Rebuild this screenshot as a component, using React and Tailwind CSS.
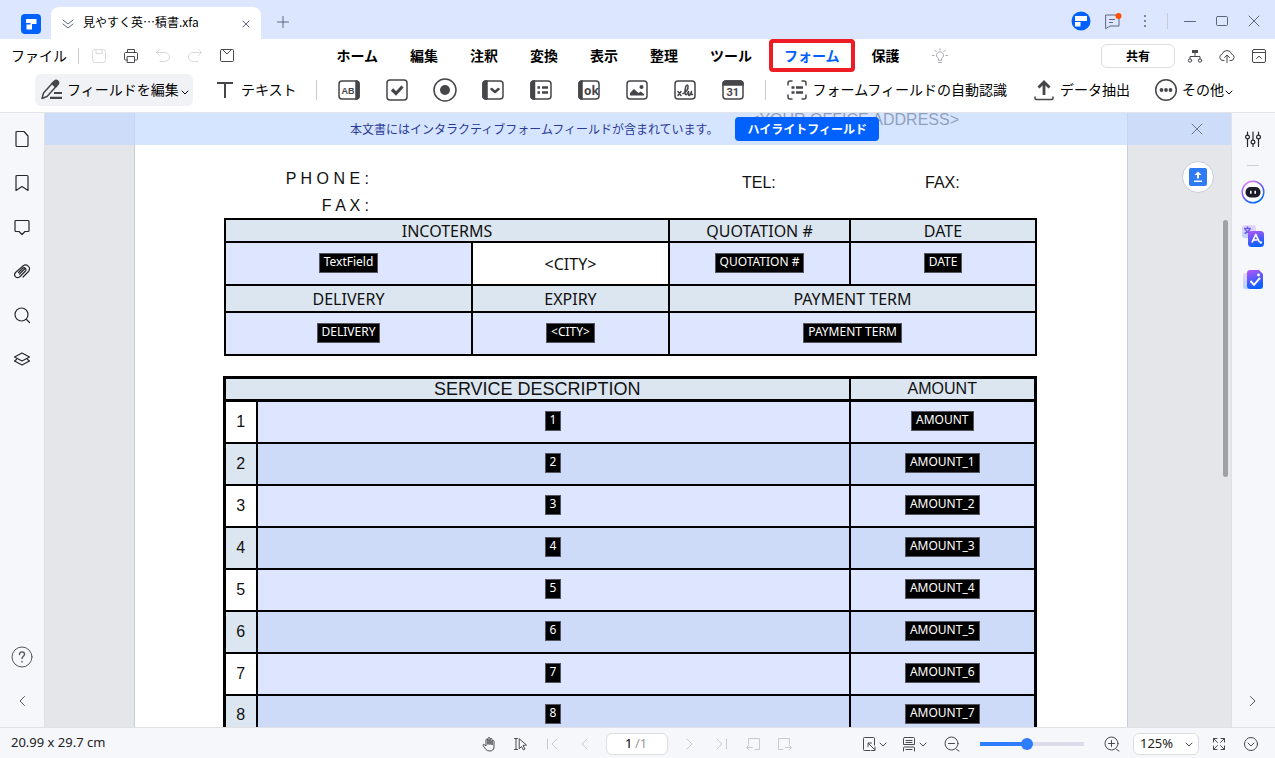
import { useState } from 'react'

const Icon = ({ size = 16, stroke = 1, className = '', children }) => (
  <svg
    width={size}
    height={size}
    viewBox={`0 0 ${size} ${size}`}
    fill="none"
    stroke="currentColor"
    strokeWidth={stroke}
    strokeLinecap="round"
    strokeLinejoin="round"
    className={`shrink-0 ${className}`}
    aria-hidden="true"
  >
    {children}
  </svg>
)

const IconButton = ({ label, className = 'w-8 h-8', children }) => (
  <button type="button" aria-label={label} className={`flex items-center justify-center shrink-0 ${className}`}>
    {children}
  </button>
)

const Chevron = ({ className = '' }) => (
  <Icon size={8} className={className}>
    <path d="M1 3l3 3 3-3" />
  </Icon>
)

const menus = ['ホーム', '編集', '注釈', '変換', '表示', '整理', 'ツール', 'フォーム', '保護']

const formTools = [
  {
    label: 'テキストフィールド',
    art: (
      <>
        <rect x="2" y="3" width="20" height="18" rx="3" />
        <path d="M19 3a3 3 0 0 1 3 3v12a3 3 0 0 1-3 3z" fill="currentColor" />
        <text x="4.5" y="15.5" fontSize="9" fontWeight="700" fontFamily="Liberation Sans, sans-serif" fill="currentColor" stroke="none">AB</text>
      </>
    ),
  },
  {
    label: 'チェックボックス',
    art: (
      <>
        <rect x="2" y="2" width="20" height="20" rx="3" />
        <path d="M7 11.5l4 4 6.5-7" strokeWidth="3.2" strokeLinecap="butt" strokeLinejoin="miter" />
      </>
    ),
  },
  {
    label: 'ラジオボタン',
    art: (
      <>
        <circle cx="12" cy="12" r="11" />
        <circle cx="12" cy="12" r="5" fill="currentColor" stroke="none" />
      </>
    ),
  },
  {
    label: 'コンボボックス',
    art: (
      <>
        <rect x="2" y="3" width="20" height="18" rx="3" />
        <path d="M6 3H5a3 3 0 0 0-3 3v12a3 3 0 0 0 3 3h1z" fill="currentColor" />
        <path d="M10.5 11l3.5 3 3.5-3" strokeWidth="2.5" />
      </>
    ),
  },
  {
    label: 'リストボックス',
    art: (
      <>
        <rect x="2" y="3" width="20" height="18" rx="3" />
        <path d="M5.5 3H5a3 3 0 0 0-3 3v12a3 3 0 0 0 3 3h.5z" fill="currentColor" />
        <path d="M8.5 9.5H11M8.5 14.5H11M13 9.5h6M13 14.5h6" strokeWidth="2.4" strokeLinecap="butt" />
      </>
    ),
  },
  {
    label: 'ボタン',
    art: (
      <>
        <rect x="2" y="3" width="20" height="18" rx="3" />
        <path d="M5 3a3 3 0 0 0-3 3v12a3 3 0 0 0 3 3z" fill="currentColor" />
        <text x="7" y="16.5" fontSize="12" fontWeight="700" fontFamily="Open Sans, sans-serif" fill="currentColor" stroke="none">ok</text>
      </>
    ),
  },
  {
    label: '画像フィールド',
    art: (
      <>
        <rect x="2" y="3" width="20" height="18" rx="3" />
        <path d="M5 17.5V15l4-4 4.500 4 2-1.500 3.500 2.500v1.500z" fill="currentColor" stroke="none" />
        <circle cx="16.5" cy="9" r="2" fill="currentColor" stroke="none" />
      </>
    ),
  },
  {
    label: 'デジタル署名',
    art: (
      <>
        <rect x="2" y="3" width="20" height="18" rx="3" />
        <path d="M5 13.5l3 4M8 13.5l-3 4" />
        <path d="M10 15.5c3-1 5.5-4.5 5-7.500-.3-1.500-1.800-1-2.200.5-.8 3-1.300 6.500-.3 8 1 1 2-1 3-3 .5 2-.5 4 .7 4 .8 0 1.800-2.500 2.300-4-.3 2-.5 3.500 1 3" />
      </>
    ),
  },
  {
    label: '日付フィールド',
    art: (
      <>
        <rect x="2" y="3" width="20" height="18" rx="3" />
        <path d="M2 7V6a3 3 0 0 1 3-3h14a3 3 0 0 1 3 3v1z" fill="currentColor" />
        <text x="5.5" y="18" fontSize="11" fontWeight="700" fontFamily="Roboto, sans-serif" fill="currentColor" stroke="none">31</text>
      </>
    ),
  },
]

const sideTools = [
  { label: 'サムネイル', path: 'M4 1.5h7L15 6v9.500a1 1 0 0 1-1 1H4a1 1 0 0 1-1-1v-13a1 1 0 0 1 1-1z' },
  { label: 'ブックマーク', path: 'M3 16.5v-14a1 1 0 0 1 1-1h10a1 1 0 0 1 1 1v14l-6-4z' },
  { label: '注釈', path: 'M3 2.5h12a1 1 0 0 1 1 1v9a1 1 0 0 1-1 1h-3L9 16.500 6 13.500H3a1 1 0 0 1-1-1v-9a1 1 0 0 1 1-1z' },
  { label: '添付ファイル', path: 'M10 15l5.500-5.500c3-4-2-8.500-5.500-5.500L2.500 10.500c-2.500 3 1 6.500 4 4.500l6-6c1.500-2-1-4.500-3-2.500L5.500 10.500M6.500 12l5-5' },
  { label: '検索', path: 'M15 8.500a6.500 6.500 0 1 1-13 0 6.500 6.500 0 0 1 13 0zM13.500 13.500l3 3' },
  { label: 'レイヤー', path: 'M9 3l7.500 4L9 11 1.500 7zM3.500 9.500l-2 1.500L9 15l7.500-4-2-1.500' },
]

const services = ['AMOUNT', 'AMOUNT_1', 'AMOUNT_2', 'AMOUNT_3', 'AMOUNT_4', 'AMOUNT_5', 'AMOUNT_6', 'AMOUNT_7']

const FieldTag = ({ children }) => (
  <span className="block w-fit h-5 mx-auto px-1 bg-black border border-[#55555f] font-['Noto_Sans'] text-xs leading-[16px] text-white whitespace-nowrap">
    {children}
  </span>
)

const TitleBar = () => (
  <header className="flex h-[39px] bg-[#dde6ff] text-[#5f6580]">
    <div className="flex items-center pl-[21px] pr-[10px] pt-[9px]">
      <svg width="20" height="20" viewBox="0 0 20 20" aria-hidden="true">
        <rect width="20" height="20" rx="4" fill="#0061ff" />
        <path d="M5 5h10.500v5H11v5.500H5.500v-5h4V9H5z" fill="#fff" />
      </svg>
    </div>
    <div className="flex items-center w-[210px] mt-[7px] pl-[10px] pr-[7px] pb-[2px] bg-white rounded-t-lg">
      <Icon size={14} className="mt-1">
        <path d="M2 3l5 4 5-4M2 7l5 4 5-4" />
      </Icon>
      <span className="flex-1 ml-2 text-xs text-black whitespace-nowrap">見やすく英…積書.xfa</span>
      <IconButton label="タブを閉じる" className="w-4 h-4 mt-1">
        <Icon size={8}><path d="M1 1l6 6M7 1L1 7" /></Icon>
      </IconButton>
    </div>
    <IconButton label="新しいタブ" className="w-6 h-6 ml-[10px] mt-[10px]">
      <Icon size={12}><path d="M6 .5v11M.5 6h11" /></Icon>
    </IconButton>
    <div className="flex items-center ml-auto mr-[5px] mt-[2px]">
      <IconButton label="アカウント">
        <svg width="20" height="20" viewBox="0 0 20 20" aria-hidden="true">
          <circle cx="10" cy="10" r="9.5" fill="#0061ff" />
          <path d="M4 5h12v5H4zM4 11h5.500v4.500H4z" fill="#fff" />
        </svg>
      </IconButton>
      <IconButton label="メッセージ">
        <Icon size={18}>
          <path d="M2 3h13v11H6l-4 2.500zM5.500 7.500h5M5.500 10.500h3" />
          <circle cx="14.5" cy="4" r="3" fill="#ff5000" stroke="none" />
        </Icon>
      </IconButton>
      <IconButton label="メニュー">
        <Icon size={16}>
          <g fill="currentColor" stroke="none">
            <circle cx="8" cy="3" r="1" />
            <circle cx="8" cy="8" r="1" />
            <circle cx="8" cy="13" r="1" />
          </g>
        </Icon>
      </IconButton>
      <span className="w-px h-4 mx-[6px] bg-[#c8cad4]" />
      <IconButton label="最小化"><Icon size={12}><path d="M.5 6.500h11" /></Icon></IconButton>
      <IconButton label="最大化"><Icon size={12}><rect x=".5" y="1.5" width="11" height="9" rx="1" /></Icon></IconButton>
      <IconButton label="閉じる"><Icon size={12}><path d="M1 1l10 10M11 1L1 11" /></Icon></IconButton>
    </div>
  </header>
)

const MenuBar = ({ active, setActive }) => (
  <nav className="grid grid-cols-[1fr_auto_1fr] items-center h-[34px] text-sm">
    <div className="flex items-center pl-[11px]">
      <button type="button" className="pb-[2px]">ファイル</button>
      <span className="w-px h-4 ml-[11px] mr-1 bg-[#cccdd4]" />
      <IconButton label="保存">
        <Icon className="text-[#d9dade]"><rect x="1.5" y="1.5" width="13" height="13" rx="2" /><path d="M5 1.500v4h6v-4" /></Icon>
      </IconButton>
      <IconButton label="印刷">
        <Icon className="text-[#4a4a4e]">
          <path d="M4.500 4.500v-3h7v3M4.500 12h-2a1 1 0 0 1-1-1V5.500a1 1 0 0 1 1-1h11a1 1 0 0 1 1 1V11a1 1 0 0 1-1 1h-2" />
          <rect x="4.5" y="8.5" width="7" height="6" />
        </Icon>
      </IconButton>
      <IconButton label="元に戻す">
        <Icon className="text-[#d9dade]"><path d="M4.500 1.500l-3 3 3 3M1.500 4.500H10a4.500 4.500 0 0 1 0 9H5" /></Icon>
      </IconButton>
      <IconButton label="やり直し">
        <Icon className="text-[#d9dade]"><path d="M11.500 1.500l3 3-3 3M14.500 4.500H6a4.500 4.500 0 0 0 0 9h5" /></Icon>
      </IconButton>
      <IconButton label="メール">
        <Icon className="text-[#4a4a4e]"><rect x="1.5" y="1.5" width="13" height="12" rx="1" /><path d="M4 2l4 4 4-4" /></Icon>
      </IconButton>
    </div>
    <div className="flex items-center gap-8 ml-[9px] pb-px font-bold">
      {menus.map((name) =>
        name === active ? (
          <button key={name} type="button" className="h-[33px] -mx-[15px] px-[11px] pb-[2px] border-4 border-[#ee1c24] rounded-sm text-[#0061ff] whitespace-nowrap">
            {name}
          </button>
        ) : (
          <button key={name} type="button" onClick={() => setActive(name)} className="pb-[2px] whitespace-nowrap">
            {name}
          </button>
        ),
      )}
      <IconButton label="ヒント" className="w-4 h-4">
        <Icon className="text-[#a4a6b8]">
          <path d="M6.500 12v-1.500a3.500 3.500 0 1 1 3 0V12zM6.500 14.500h3M8 .5v1.500M2.500 2l1.500 1.500M13.500 2L12 3.500M.5 7.500H2M14 7.500h1.500" />
        </Icon>
      </IconButton>
    </div>
    <div className="flex items-center justify-end">
      <button type="button" className="w-[74px] h-6 mr-1 border border-[#dcdde2] rounded-md text-xs font-bold">共有</button>
      <IconButton label="組織">
        <Icon className="text-[#4a4a4e]">
          <rect x="5" y="2" width="6" height="3" fill="currentColor" stroke="none" />
          <path d="M8 5v3M3 11V8.500h10V11" />
          <circle cx="3" cy="12.5" r="1.7" /><circle cx="13" cy="12.5" r="1.7" />
        </Icon>
      </IconButton>
      <IconButton label="クラウドへ保存">
        <Icon className="text-[#4a4a4e]">
          <path d="M5 12.500H4a3.200 3.200 0 0 1-.8-6.300 4.900 4.900 0 0 1 9.500 0A3.200 3.200 0 0 1 12 12.500h-1M8 14.500v-7M5.500 9.500L8 7l2.500 2.500" />
        </Icon>
      </IconButton>
      <IconButton label="リボンを折りたたむ">
        <Icon className="text-[#4a4a4e]"><rect x="1.5" y="1.5" width="13" height="13" rx="1.5" /><path d="M1.500 4.500h13M5.500 10.500L8 8l2.500 2.500" /></Icon>
      </IconButton>
    </div>
  </nav>
)

const Toolbar = () => (
  <div className="flex items-center h-10 pl-[35px] pb-[6px] border-b border-[#e4e5e8] text-sm whitespace-nowrap">
    <button type="button" className="flex items-center h-8 w-[158px] pl-[5px] bg-[#f1f2f6] rounded-md">
      <Icon size={24} stroke={1.5} className="mr-[3px] text-[#45454a]">
        <path d="M2 20.500l1.500-5.500L13 4.500l3.500 3.500L7 18.500z" />
        <path d="M12 5.500l2.500-2.500c2-2 5.500 1 3.500 3.500L15.500 9z" fill="currentColor" />
        <path d="M14 15h8M10 19.800h12" strokeWidth="2.2" strokeLinecap="butt" />
      </Icon>
      <span className="pb-[2px]">フィールドを編集</span>
      <Chevron className="ml-[2px] mt-1" />
    </button>
    <button type="button" className="flex items-center ml-6">
      <Icon size={16} stroke={2} className="mr-2 text-[#45454a]"><path d="M0 1h16M8 1v15" strokeLinecap="butt" /></Icon>
      <span className="pb-[2px]">テキスト</span>
    </button>
    <span className="w-px h-5 ml-[19px] mr-2 bg-[#c8cad4]" />
    {formTools.map((tool) => (
      <IconButton key={tool.label} label={tool.label} className="w-12 h-8">
        <Icon size={24} stroke={1.5} className="text-[#45454a]">{tool.art}</Icon>
      </IconButton>
    ))}
    <span className="w-px h-5 ml-[8px] mr-[20px] bg-[#c8cad4]" />
    <button type="button" className="flex items-center">
      <Icon size={22} stroke={1.5} className="mr-[5px] text-[#45454a]">
        <path d="M6 2H4a2 2 0 0 0-2 2v2M16 2h2a2 2 0 0 1 2 2v2M2 16v2a2 2 0 0 0 2 2h2M20 16v2a2 2 0 0 1-2 2h-2" />
        <path d="M5.500 8.500h3M5.500 13.500h3M10 8.500h7M10 13.500h7" strokeWidth="2.6" strokeLinecap="butt" />
      </Icon>
      <span className="pb-[2px]">フォームフィールドの自動認識</span>
    </button>
    <button type="button" className="flex items-center ml-[26px]">
      <Icon size={22} className="mr-[5px] text-[#45454a]" stroke={1.5}>
        <path d="M2 18v1.500a1 1 0 0 0 1 1h16a1 1 0 0 0 1-1V18" />
        <path d="M11 16V4M5.500 8.500L11 3l5.500 5.500" strokeWidth="2.8" strokeLinecap="butt" strokeLinejoin="miter" />
      </Icon>
      <span className="pb-[2px]">データ抽出</span>
    </button>
    <button type="button" className="flex items-center ml-6">
      <Icon size={24} className="mr-1 text-[#45454a]" stroke={1.5}>
        <circle cx="12" cy="12" r="10.3" />
        <g fill="currentColor" stroke="none"><circle cx="7.5" cy="12" r="1.9" /><circle cx="12" cy="12" r="1.9" /><circle cx="16.5" cy="12" r="1.9" /></g>
      </Icon>
      <span className="pb-[2px]">その他</span>
      <Chevron className="ml-px mt-1" />
    </button>
  </div>
)

const LeftRail = () => (
  <aside className="flex flex-col items-center w-[45px] py-1 bg-[#f6f7fb] border-r border-[#e0e1e5] text-[#26262b]">
    {sideTools.map((tool) => (
      <IconButton key={tool.label} label={tool.label} className="w-11 h-11">
        <Icon size={18} stroke={1.2}><path d={tool.path} /></Icon>
      </IconButton>
    ))}
    <IconButton label="ヘルプ" className="w-11 h-11 mt-auto">
      <Icon size={22} className="text-[#55555c]">
        <circle cx="11" cy="11" r="10" />
        <path d="M8.500 8.500c0-3.500 5-3.500 5-.3 0 2-2.500 2-2.500 4.300M11 15.500v.5" strokeWidth="1.4" />
      </Icon>
    </IconButton>
    <IconButton label="折りたたむ" className="w-11 h-11">
      <Icon size={12} className="text-[#55555c]"><path d="M8.500 1.500L4 6l4.500 4.500" /></Icon>
    </IconButton>
  </aside>
)

const RightRail = () => (
  <aside className="flex flex-col items-center w-11 py-1 pr-[2px] bg-[#f6f7fb] border-l border-[#e0e1e5] text-[#26262b]">
    <IconButton label="プロパティ" className="w-10 h-11">
      <Icon size={18} stroke={1.2}>
        <path d="M3.500 2v3M3.500 9v7.500M9 2v8M9 14v2.500M14.500 2v3M14.500 9v7.500" />
        <circle cx="3.5" cy="7" r="1.9" /><circle cx="9" cy="12" r="1.9" /><circle cx="14.5" cy="7" r="1.9" />
      </Icon>
    </IconButton>
    <span className="w-3 h-px my-1 bg-[#cfd0d6]" />
    <IconButton label="AIアシスタント" className="w-10 h-11">
      <svg width="24" height="24" viewBox="0 0 24 24" aria-hidden="true">
        <defs>
          <linearGradient id="ring" x1="0" y1="0" x2=".6" y2="1"><stop stopColor="#ff8af0" /><stop offset=".5" stopColor="#7d5cf5" /><stop offset="1" stopColor="#0a6cff" /></linearGradient>
        </defs>
        <circle cx="12" cy="12" r="10.8" fill="#fff" stroke="url(#ring)" strokeWidth="1.5" />
        <rect x="4.5" y="7" width="15" height="10.5" rx="5" fill="#1c1c28" />
        <path d="M9.800 10.800v3M14.200 10.800v3" stroke="#fff" strokeWidth="1.6" />
      </svg>
    </IconButton>
    <IconButton label="翻訳" className="w-10 h-11">
      <svg width="24" height="24" viewBox="0 0 24 24" aria-hidden="true">
        <defs>
          <linearGradient id="violet" x1="0" y1="0" x2=".3" y2="1"><stop stopColor="#b755f5" /><stop offset="1" stopColor="#0a60ff" /></linearGradient>
          <linearGradient id="pale" x1="0" y1="0" x2="0" y2="1"><stop stopColor="#e6d4fb" /><stop offset="1" stopColor="#b9d2ff" /></linearGradient>
        </defs>
        <rect x="1" y="1" width="14" height="13" rx="3" fill="url(#pale)" />
        <path d="M3 4.500h7M6.500 2.500v2M3.500 9.500c3-1 5-2.500 5.500-5M4 5c1 2 3 3.500 4 4" stroke="#6b5cf0" strokeWidth="1.5" fill="none" />
        <rect x="7" y="7" width="16" height="16" rx="3.5" fill="url(#violet)" />
        <path d="M11 18.500l3.800-8 3.500 7.500M12.300 16h4" stroke="#fff" strokeWidth="1.7" fill="none" strokeLinejoin="round" />
        <circle cx="19.8" cy="18.5" r="1.3" fill="#fff" />
      </svg>
    </IconButton>
    <IconButton label="校正" className="w-10 h-11">
      <svg width="24" height="24" viewBox="0 0 24 24" aria-hidden="true">
        <rect x="2" y="5" width="10" height="16" rx="2.5" fill="url(#pale)" />
        <path d="M9 2h9l4 4v12a3 3 0 0 1-3 3H9a3 3 0 0 1-3-3V5a3 3 0 0 1 3-3z" fill="url(#violet)" />
        <path d="M9.500 13l3.500 3.800 6-7" stroke="#fff" strokeWidth="1.9" fill="none" />
        <circle cx="17.5" cy="7" r="1.4" fill="#fff" />
      </svg>
    </IconButton>
    <IconButton label="展開" className="w-10 h-11 mt-auto">
      <Icon size={12} className="text-[#55555c]"><path d="M3.500 1.500L8 6l-4.500 4.500" /></Icon>
    </IconButton>
  </aside>
)

const headCell = 'p-0 border-2 border-black bg-[#dce6f0] font-normal leading-5'
const fieldCell = 'p-0 pb-[2px] border-2 border-black bg-[#dde5ff]'
const altFieldCell = 'p-0 pb-[2px] border-2 border-black bg-[#cddaf8]'

const Sheet = () => (
  <article className="flex-1 min-w-0 pl-[89px] pr-[90px] bg-white border-x border-[#c9cddb] font-['Liberation_Sans'] text-base text-[#111]">
    <p className="pr-[78px] leading-[14px] text-right whitespace-nowrap">&lt;YOUR OFFICE ADDRESS&gt;</p>
    <div className="grid grid-cols-[145fr_373fr_183fr_112fr] h-[53px] mt-[38px] leading-[27px] whitespace-nowrap">
      <div className="text-right">
        <p>P H O N E :</p>
        <p>F A X :</p>
      </div>
      <span />
      <p className="pt-1">TEL:</p>
      <p className="pt-1">FAX:</p>
    </div>

    <table className="w-full table-fixed border-collapse font-['Noto_Sans'] text-center">
      <colgroup>
        <col className="w-[247px]" />
        <col className="w-[197px]" />
        <col className="w-[181px]" />
        <col className="w-[186px]" />
      </colgroup>
      <tbody>
        <tr className="h-[23px]">
          <th colSpan={2} className={headCell}>INCOTERMS</th>
          <th className={headCell}>QUOTATION #</th>
          <th className={headCell}>DATE</th>
        </tr>
        <tr className="h-[43px]">
          <td className={fieldCell}><FieldTag>TextField</FieldTag></td>
          <td className="p-0 border-2 border-black">&lt;CITY&gt;</td>
          <td className={fieldCell}><FieldTag>QUOTATION #</FieldTag></td>
          <td className={fieldCell}><FieldTag>DATE</FieldTag></td>
        </tr>
        <tr className="h-[27px]">
          <th className={headCell}>DELIVERY</th>
          <th className={headCell}>EXPIRY</th>
          <th colSpan={2} className={headCell}>PAYMENT TERM</th>
        </tr>
        <tr className="h-[43px]">
          <td className={fieldCell}><FieldTag>DELIVERY</FieldTag></td>
          <td className={fieldCell}><FieldTag>&lt;CITY&gt;</FieldTag></td>
          <td colSpan={2} className={fieldCell}><FieldTag>PAYMENT TERM</FieldTag></td>
        </tr>
      </tbody>
    </table>

    <div className="mt-5 -ml-px">
      <table className="w-full table-fixed border-collapse border-[3px] border-black text-center">
        <colgroup>
          <col className="w-8" />
          <col className="w-[593px]" />
          <col className="w-[186px]" />
        </colgroup>
        <thead>
          <tr className="h-[23px]">
            <th colSpan={2} className="p-0 border-2 border-b-[3px] border-black bg-[#dce6f0] text-lg leading-5 font-normal">SERVICE DESCRIPTION</th>
            <th className="p-0 border-2 border-b-[3px] border-black bg-[#dce6f0] leading-5 font-normal">AMOUNT</th>
          </tr>
        </thead>
        <tbody>
          {services.map((name, i) => {
            const even = i % 2 === 1
            return (
              <tr key={name} className="h-[42px]">
                <td className={even ? 'p-0 border-2 border-black bg-[#dce6f0]' : 'p-0 border-2 border-black'}>{i + 1}</td>
                <td className={even ? altFieldCell : fieldCell}><FieldTag>{i + 1}</FieldTag></td>
                <td className={even ? altFieldCell : fieldCell}><FieldTag>{name}</FieldTag></td>
              </tr>
            )
          })}
        </tbody>
      </table>
    </div>
  </article>
)

const Viewer = () => {
  const [notice, setNotice] = useState(true)

  return (
    <main className="relative flex flex-1 min-w-0 pl-[89px] pr-[103px] bg-[#e5e6ea] overflow-hidden">
      <Sheet />
      {/* Notice strip floats over the page */}
      {notice && (
        <div className="absolute inset-x-0 top-0 flex items-center h-8 bg-[#c3d8ff]/70 text-xs text-[#2b3a94]">
          <p className="ml-[305px] whitespace-nowrap">本文書にはインタラクティブフォームフィールドが含まれています。</p>
          <button type="button" className="h-6 ml-[17px] px-3 bg-[#0061ff] rounded-sm font-bold text-white whitespace-nowrap">ハイライトフィールド</button>
          <button type="button" aria-label="通知を閉じる" onClick={() => setNotice(false)} className="flex items-center justify-center w-8 h-8 ml-auto mr-[18px] text-[#6d7388]">
            <Icon size={12}><path d="M1 1l10 10M11 1L1 11" /></Icon>
          </button>
        </div>
      )}
      <button type="button" aria-label="アップロード" className="absolute top-12 right-[17px] flex items-center justify-center w-8 h-8 bg-white border border-[#c9cbdc] rounded-full">
        <svg width="18" height="18" viewBox="0 0 18 18" aria-hidden="true">
          <rect width="18" height="18" rx="2" fill="#2f7bf6" />
          <path d="M9 3.500l3.500 3.500H10v3.500H8V7H5.500zM5 12.500h8v1.500H5z" fill="#fff" />
        </svg>
      </button>
      <span className="absolute top-[107px] right-[3px] w-[5px] h-[257px] bg-[#9fa1a5] rounded-full" />
    </main>
  )
}

const StatusBar = () => {
  const [zoom, setZoom] = useState(45)

  return (
    <footer className="grid grid-cols-[1fr_auto_1fr] items-center h-[31px] bg-[#f6f7fb] border-t border-[#e0e1e5] text-[13px] text-[#222] font-['Noto_Sans']">
      <span className="pl-[11px] pb-[2px]">20.99 x 29.7 cm</span>
      <div className="flex items-center pr-px text-[#c9cad0]">
        <IconButton label="手のひらツール">
          <Icon className="text-[#4a4a4e]">
            <path d="M5 9.500V4a1 1 0 0 1 2 0v4.500V2.500a1 1 0 0 1 2 0v6-5a1 1 0 0 1 2 0v5.500-3.500a1 1 0 0 1 2 0V11c0 3-2 4-4.500 4-3 0-4-2-6.500-5.500-.5-1 .8-1.500 1.500-.8z" />
          </Icon>
        </IconButton>
        <IconButton label="選択ツール">
          <Icon className="text-[#4a4a4e]"><path d="M1.500 2.500h3M3 2.500v11M1.500 13.500h3M6.500 3l7 6-3.500.5 2 3.500-1.500 1-2-3.500-2 2z" /></Icon>
        </IconButton>
        <IconButton label="最初のページ"><Icon><path d="M2.500 3v10M12 3L7 8l5 5" /></Icon></IconButton>
        <IconButton label="前のページ"><Icon><path d="M10 3L5 8l5 5" /></Icon></IconButton>
        <label className="flex items-center w-[62px] h-[22px] mx-[5px] pl-[18px] bg-white border border-[#dcdde2] rounded-md text-[#9a9ba2]">
          <input aria-label="ページ" defaultValue="1" className="w-2 text-black outline-none" />
          <span className="ml-[2px]">/1</span>
        </label>
        <IconButton label="次のページ"><Icon><path d="M6 3l5 5-5 5" /></Icon></IconButton>
        <IconButton label="最後のページ"><Icon><path d="M13.500 3v10M4 3l5 5-5 5" /></Icon></IconButton>
        <IconButton label="前の表示"><Icon><path d="M3.500 8V2.500h11v11H10M7.500 11.500h-6M4 9l-2.500 2.500L4 14" /></Icon></IconButton>
        <IconButton label="次の表示"><Icon><path d="M12.500 8V2.500h-11v11H6M8.500 11.500h6M12 9l2.500 2.500L12 14" /></Icon></IconButton>
      </div>
      <div className="flex items-center justify-end pr-3 text-[#4a4a4e]">
        <IconButton label="ページに合わせる" className="gap-[2px] w-8 h-6">
          <Icon><path d="M9 14.500H3.500a1 1 0 0 1-1-1v-11a1 1 0 0 1 1-1h9a1 1 0 0 1 1 1V9M7 10.500V7h3.500M7.500 7.500l6 6M10.500 14.500h3.500V11" /></Icon>
          <Chevron />
        </IconButton>
        <IconButton label="表示モード" className="gap-[2px] w-8 h-6 ml-2">
          <Icon><path d="M3.500 1.500h9a1 1 0 0 1 1 1v6h-11v-6a1 1 0 0 1 1-1zM5 4.500h6M5 6.500h6M2.500 15v-3a1 1 0 0 1 1-1h9a1 1 0 0 1 1 1v3M5 13.500h6" /></Icon>
          <Chevron />
        </IconButton>
        <IconButton label="縮小" className="w-6 h-6 ml-[10px]">
          <Icon><circle cx="7.5" cy="7.5" r="6.5" /><path d="M4.500 7.500h6M12.500 13.500l2.500 1.500" /></Icon>
        </IconButton>
        <input
          type="range"
          aria-label="ズーム"
          value={zoom}
          onChange={(e) => setZoom(Number(e.target.value))}
          className="w-[104px] h-1 mx-4 appearance-none [&::-webkit-slider-thumb]:appearance-none [&::-webkit-slider-thumb]:w-3 [&::-webkit-slider-thumb]:h-3 [&::-webkit-slider-thumb]:rounded-full [&::-webkit-slider-thumb]:bg-[#2f7dff]"
          style={{ background: `linear-gradient(to right, #2f7dff ${zoom}%, #dcddea ${zoom}%)` }}
        />
        <IconButton label="拡大" className="w-6 h-6">
          <Icon><circle cx="7.5" cy="7.5" r="6.5" /><path d="M4.500 7.500h6M7.500 4.500v6M12.500 13.500l2.500 1.500" /></Icon>
        </IconButton>
        <div className="relative flex items-center ml-[9px] mr-2">
          <select aria-label="倍率" className="appearance-none w-[66px] h-[22px] pl-[6px] bg-white border border-[#dcdde2] rounded-md text-[#222]">
            <option>125%</option>
          </select>
          <Chevron className="absolute right-[6px] pointer-events-none" />
        </div>
        <IconButton label="全画面" className="w-6 h-6">
          <Icon size={14}><path d="M1.500 5V1.500H5M1.500 1.500l4 4M9 1.500h3.500V5M12.500 1.500l-4 4M1.500 9v3.500H5M1.500 12.500l4-4M12.500 9v3.500H9M12.500 12.500l-4-4" /></Icon>
        </IconButton>
        <IconButton label="その他" className="w-6 h-6 ml-2">
          <Icon><circle cx="8" cy="8" r="6.5" /><path d="M5 7l3 3 3-3" /></Icon>
        </IconButton>
      </div>
    </footer>
  )
}

const App = () => {
  const [active, setActive] = useState('フォーム')

  return (
    <div className="flex flex-col h-screen bg-white overflow-hidden font-['Noto_Sans_CJK_JP',sans-serif] text-black">
      <TitleBar />
      <MenuBar active={active} setActive={setActive} />
      <Toolbar />
      <div className="flex flex-1 min-h-0">
        <LeftRail />
        <Viewer />
        <RightRail />
      </div>
      <StatusBar />
    </div>
  )
}

export default App
